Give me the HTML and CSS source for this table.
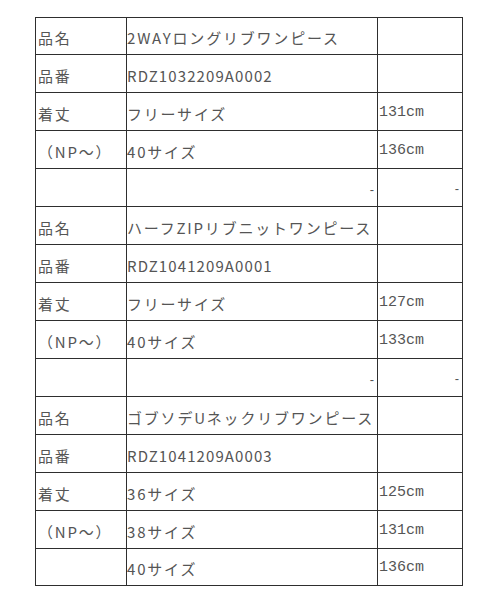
FILE: index.html
```html
<!DOCTYPE html>
<html lang="ja">
<head>
<meta charset="utf-8">
<link rel="stylesheet" href="styles.css">
</head>
<body>
<div class="size-table" role="table">
  <div class="cell lbl">品名</div><div class="cell val">2WAYロングリブワンピース</div><div class="cell num"></div>
  <div class="cell lbl">品番</div><div class="cell val code">RDZ1032209A0002</div><div class="cell num"></div>
  <div class="cell lbl">着丈</div><div class="cell val">フリーサイズ</div><div class="cell num">131cm</div>
  <div class="cell lbl">（NP～）</div><div class="cell val">40サイズ</div><div class="cell num">136cm</div>
  <div class="cell lbl"></div><div class="cell val dash">-</div><div class="cell num dash">-</div>
  <div class="cell lbl">品名</div><div class="cell val">ハーフZIPリブニットワンピース</div><div class="cell num"></div>
  <div class="cell lbl">品番</div><div class="cell val code">RDZ1041209A0001</div><div class="cell num"></div>
  <div class="cell lbl">着丈</div><div class="cell val">フリーサイズ</div><div class="cell num">127cm</div>
  <div class="cell lbl">（NP～）</div><div class="cell val">40サイズ</div><div class="cell num">133cm</div>
  <div class="cell lbl"></div><div class="cell val dash">-</div><div class="cell num dash">-</div>
  <div class="cell lbl">品名</div><div class="cell val">ゴブソデUネックリブワンピース</div><div class="cell num"></div>
  <div class="cell lbl">品番</div><div class="cell val code">RDZ1041209A0003</div><div class="cell num"></div>
  <div class="cell lbl">着丈</div><div class="cell val">36サイズ</div><div class="cell num">125cm</div>
  <div class="cell lbl">（NP～）</div><div class="cell val">38サイズ</div><div class="cell num">131cm</div>
  <div class="cell lbl"></div><div class="cell val">40サイズ</div><div class="cell num">136cm</div>
</div>
</body>
</html>
```
FILE: styles.css
```css
html, body {
  margin: 0;
  background: #ffffff;
}
.size-table {
  margin: 17px 0 0 35px;
  width: 428px;
  box-sizing: border-box;
  display: grid;
  grid-template-columns: 90px 250px 84px;
  grid-template-rows: 36px repeat(13, 37px) 36px;
  gap: 1px;
  padding: 1px;
  background: #2e2e2e;
  font-family: "Noto Sans CJK JP", "Noto Sans", sans-serif;
  font-size: 15px;
  letter-spacing: 1.8px;
  color: #555555;
}
.cell {
  background: #ffffff;
  display: flex;
  align-items: center;
  padding: 4px 0 0 0;
  white-space: nowrap;
  overflow: hidden;
  line-height: 20px;
}
.lbl { padding-left: 2px; }
.val { padding-left: 0; }
.code { letter-spacing: 1.1px; }
.num {
  font-family: "Liberation Mono", monospace;
  font-size: 15px;
  letter-spacing: 0;
  padding-top: 2px;
  padding-left: 1px;
}
.dash {
  justify-content: flex-end;
  padding-right: 3px;
  font-family: "Liberation Sans", sans-serif;
  font-size: 13px;
  letter-spacing: 0;
}
```
